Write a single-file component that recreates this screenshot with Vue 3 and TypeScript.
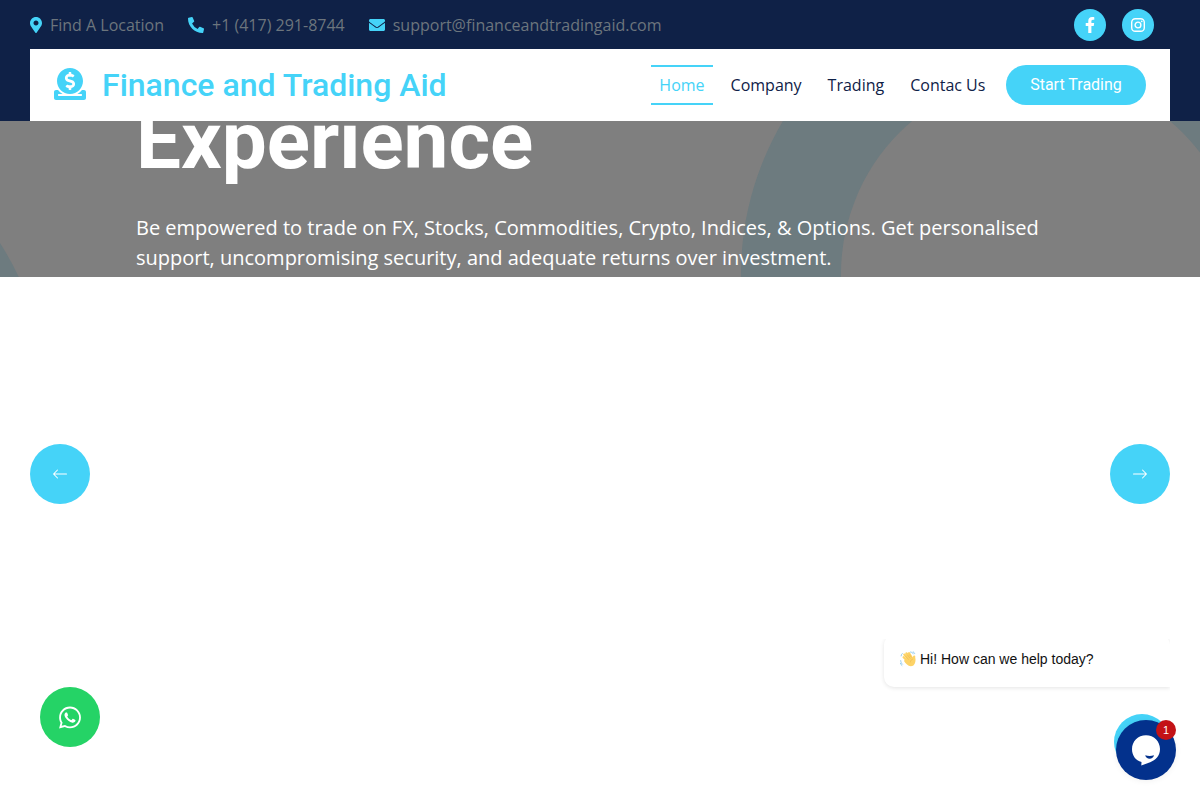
<script setup lang="ts">
interface NavLink {
  label: string
  active?: boolean
}

const links: NavLink[] = [
  { label: 'Home', active: true },
  { label: 'Company' },
  { label: 'Trading' },
  { label: 'Contac Us' },
]
</script>

<template>
  <div class="page">
    <header>
      <div class="topbar">
        <div class="contact">
          <svg class="pin" viewBox="0 0 384 512"><path d="M172.268 501.67C26.97 291.031 0 269.413 0 192 0 85.961 85.961 0 192 0s192 85.961 192 192c0 77.413-26.97 99.031-172.268 309.67-9.535 13.774-29.93 13.773-39.464 0zM192 272c44.183 0 80-35.817 80-80s-35.817-80-80-80-80 35.817-80 80 35.817 80 80 80z" /></svg>
          <span>Find A Location</span>
        </div>
        <div class="contact">
          <svg class="phone" viewBox="0 0 512 512"><path d="M497.39 361.8l-112-48a24 24 0 0 0-28 6.9l-49.6 60.6A370.66 370.66 0 0 1 130.6 204.11l60.6-49.6a23.94 23.94 0 0 0 6.9-28l-48-112A24.16 24.16 0 0 0 122.6.61l-104 24A24 24 0 0 0 0 48c0 256.5 207.9 464 464 464a24 24 0 0 0 23.4-18.6l24-104a24.29 24.29 0 0 0-14.01-27.6z" /></svg>
          <span>+1 (417) 291-8744</span>
        </div>
        <div class="contact">
          <svg class="mail" viewBox="0 0 512 512"><path d="M502.3 190.8c3.9-3.1 9.7-.2 9.7 4.7V400c0 26.5-21.5 48-48 48H48c-26.5 0-48-21.5-48-48V195.6c0-5 5.7-7.8 9.7-4.7 22.4 17.4 52.1 39.5 154.1 113.6 21.1 15.4 56.7 47.8 92.2 47.6 35.7.3 72-32.8 92.3-47.6 102-74.1 131.6-96.3 154-113.7zM256 320c23.2.4 56.6-29.2 73.4-41.4 132.7-96.3 142.8-104.7 173.4-128.7 5.8-4.5 9.2-11.5 9.2-18.9v-19c0-26.5-21.5-48-48-48H48c-26.5 0-48 21.5-48 48v19c0 7.4 3.4 14.3 9.2 18.9 30.6 23.9 40.7 32.4 173.4 128.7 16.8 12.2 50.2 41.8 73.4 41.4z" /></svg>
          <span>support@financeandtradingaid.com</span>
        </div>
        <div class="socials">
          <a class="social">
            <svg class="facebook" viewBox="0 0 320 512"><path d="M279.14 288l14.22-92.66h-88.91v-60.13c0-25.35 12.42-50.06 52.24-50.06h40.42V6.26S260.43 0 225.36 0c-73.22 0-121.08 44.38-121.08 124.72v70.62H22.89V288h81.39v224h100.17V288z" /></svg>
          </a>
          <a class="social">
            <svg class="instagram" viewBox="0 0 16 16">
              <rect x="1.7" y="1.7" width="12.6" height="12.6" rx="3.6" />
              <circle cx="8" cy="8" r="2.9" />
              <circle class="dot" cx="11.75" cy="4.3" r="0.85" />
            </svg>
          </a>
        </div>
      </div>
      <nav class="navbar">
        <a class="brand">
          <svg viewBox="0 0 512 512"><path d="M256 416c114.9 0 208-93.1 208-208S370.9 0 256 0 48 93.1 48 208s93.1 208 208 208zM233.8 97.4V80.6c0-9.2 7.4-16.6 16.6-16.6h11.1c9.2 0 16.6 7.4 16.6 16.6v17c15.5.8 30.5 6.1 43 15.4 5.6 4.1 6.2 12.3 1.2 17.1L306 145.6c-3.8 3.7-9.5 3.8-14 1-5.4-3.4-11.4-5.1-17.8-5.1h-38.9c-9 0-16.3 8.2-16.3 18.3 0 8.2 5 15.5 12.1 17.6l62.3 18.7c25.7 7.7 43.7 32.4 43.7 60.1 0 34-26.4 61.5-59.1 62.4v16.8c0 9.2-7.4 16.6-16.6 16.6h-11.1c-9.2 0-16.6-7.4-16.6-16.6v-17c-15.5-.8-30.5-6.1-43-15.4-5.6-4.1-6.2-12.3-1.2-17.1l16.3-15.5c3.8-3.7 9.5-3.8 14-1 5.4 3.4 11.4 5.1 17.8 5.1h38.9c9 0 16.3-8.2 16.3-18.3 0-8.2-5-15.5-12.1-17.6l-62.3-18.7c-25.7-7.7-43.7-32.4-43.7-60.1.1-34 26.4-61.5 59.1-62.4zM480 352h-32.5c-19.6 26-44.6 47.7-73 64h63.8c5.3 0 9.6 3.6 9.6 8v16c0 4.4-4.3 8-9.6 8H73.6c-5.3 0-9.6-3.6-9.6-8v-16c0-4.4 4.3-8 9.6-8h63.8c-28.4-16.3-53.3-38-73-64H32c-17.7 0-32 14.3-32 32v96c0 17.7 14.3 32 32 32h448c17.7 0 32-14.3 32-32v-96c0-17.7-14.3-32-32-32z" /></svg>
          <span>Finance and Trading Aid</span>
        </a>
        <div class="links">
          <a v-for="link in links" :key="link.label" class="link" :class="{ active: link.active }">{{ link.label }}</a>
        </div>
        <a class="cta">Start Trading</a>
      </nav>
    </header>

    <section class="hero">
      <svg class="rings" viewBox="0 0 1200 156">
        <circle cx="1041" cy="153" r="250" />
        <circle cx="-252" cy="285" r="250" />
      </svg>
      <div class="caption">
        <h1>Experience</h1>
        <p>Be empowered to trade on FX, Stocks, Commodities, Crypto, Indices, &amp; Options. Get personalised support, uncompromising security, and adequate returns over investment.</p>
      </div>
    </section>

    <button class="arrow prev">
      <svg viewBox="0 0 16 16"><path d="M15 8a.5.5 0 0 0-.5-.5H2.707l3.147-3.146a.5.5 0 1 0-.708-.708l-4 4a.5.5 0 0 0 0 .708l4 4a.5.5 0 0 0 .708-.708L2.707 8.5H14.5A.5.5 0 0 0 15 8z" /></svg>
    </button>
    <button class="arrow next">
      <svg viewBox="0 0 16 16"><path d="M1 8a.5.5 0 0 1 .5-.5h11.793l-3.147-3.146a.5.5 0 0 1 .708-.708l4 4a.5.5 0 0 1 0 .708l-4 4a.5.5 0 0 1-.708-.708L13.293 8.5H1.5A.5.5 0 0 1 1 8z" /></svg>
    </button>

    <a class="whatsapp">
      <svg viewBox="0 0 448 512"><path d="M380.9 97.1C339 55.1 283.2 32 223.9 32c-122.4 0-222 99.6-222 222 0 39.1 10.2 77.3 29.6 111L0 480l117.7-30.9c32.4 17.7 68.9 27 106.1 27h.1c122.3 0 224.1-99.6 224.1-222 0-59.3-25.2-115-67.1-157zm-157 341.6c-33.2 0-65.7-8.9-94-25.7l-6.7-4-69.8 18.3L72 359.2l-4.4-7c-18.5-29.4-28.2-63.3-28.2-98.2 0-101.7 82.8-184.5 184.6-184.5 49.3 0 95.6 19.2 130.4 54.1 34.8 34.9 56.2 81.2 56.1 130.5 0 101.8-84.9 184.6-186.6 184.6zm101.2-138.2c-5.5-2.8-32.8-16.2-37.9-18-5.1-1.9-8.8-2.8-12.5 2.8-3.7 5.6-14.3 18-17.6 21.8-3.2 3.7-6.5 4.2-12 1.4-32.6-16.3-54-29.1-75.5-66-5.7-9.8 5.7-9.1 16.3-30.3 1.8-3.7.9-6.9-.5-9.7-1.4-2.8-12.5-30.1-17.1-41.2-4.5-10.8-9.1-9.3-12.5-9.5-3.2-.2-6.9-.2-10.6-.2-3.7 0-9.7 1.4-14.8 6.9-5.1 5.6-19.4 19-19.4 46.3 0 27.3 19.9 53.7 22.6 57.4 2.8 3.7 39.1 59.7 94.8 83.8 35.2 15.2 49 16.5 66.6 13.9 10.7-1.6 32.8-13.4 37.4-26.4 4.6-13 4.6-24.1 3.2-26.4-1.3-2.5-5-3.9-10.5-6.6z" /></svg>
    </a>

    <div class="greeting-clip">
      <div class="greeting">
        <svg class="wave" viewBox="0 0 16 16">
          <g class="fingers">
            <path d="M3.600 6.200L8 10.500M4.300 3.600L9 8.600M6.400 2.300L10.800 7.600M9 2.200L12 7M14.200 5.600L13.300 9" />
          </g>
          <path class="palm" d="M4.800 8.500L10.500 5l2.700 2.300 1.300-2c1.400 1.700 1.200 4.500.5 6.700-.7 2-2.100 3.300-4.300 3.300-2.700 0-4.900-2.700-6.700-5.300z" />
          <path class="creases" d="M5.600 5.200l2.900 3.200M7.600 4.100l2.600 3.200M9.800 4l1.400 2.200M10.400 11c.1-1.600.9-2.500 2.300-2.900" />
          <path class="motion" d="M10.500 1c1.300.1 2.300.8 2.900 1.900M13.200.8c.7.4 1.200 1 1.500 1.700M.7 9.600c.1 1.500.7 2.700 1.700 3.600M.4 12.400c.3.900.8 1.600 1.500 2.100M1.100 4.900c.1-1 .5-1.800 1.200-2.400" />
        </svg>
        <span>Hi! How can we help today?</span>
      </div>
    </div>

    <div class="back-to-top"></div>
    <button class="chat">
      <svg viewBox="0 0 60 60">
        <path class="bubble" d="M30 15.200c8 0 14 6.100 14 13.800 0 7-4.600 11.300-9.800 13.200L25.300 45.400l.2-3.300C19.700 40.400 16 35.600 16 29c0-7.700 6-13.800 14-13.800z" />
        <path class="smile" d="M29.200 35.200c2.800.9 6 .9 8.800 0-.5 2.200-2.200 3.500-4.400 3.500s-3.900-1.300-4.400-3.500z" />
      </svg>
      <span class="badge">1</span>
    </button>
  </div>
</template>

<style>
html,
body {
  margin: 0;
  background: #fff;
}
</style>

<style scoped>
.page {
  position: relative;
  width: 1200px;
  height: 800px;
  overflow: hidden;
  box-sizing: border-box;
  background: #fff;
  font-family: 'Open Sans', sans-serif;
  font-size: 16px;
  line-height: 24px;
}
.page * {
  box-sizing: border-box;
}
svg {
  display: block;
  fill: currentColor;
  flex: none;
}
header {
  height: 121px;
  padding: 0 30px;
  background: #0f2147;
}
.topbar {
  display: flex;
  align-items: center;
  height: 49px;
  padding-top: 1px;
  padding-right: 16px;
  color: #6c757d;
}
.contact {
  display: flex;
  align-items: center;
  gap: 8px;
  margin-right: 24px;
  white-space: nowrap;
}
.contact svg {
  color: #45d3f8;
}
.pin {
  width: 12px;
  height: 16px;
}
.phone,
.mail {
  width: 16px;
  height: 16px;
}
.socials {
  display: flex;
  gap: 16px;
  margin-left: auto;
}
.social {
  display: flex;
  align-items: center;
  justify-content: center;
  width: 32px;
  height: 32px;
  border-radius: 50%;
  background: #45d3f8;
  color: #fff;
}
.facebook {
  width: 10px;
  height: 16px;
}
.instagram {
  width: 16px;
  height: 16px;
  fill: none;
  stroke: #fff;
  stroke-width: 1.4;
}
.dot {
  fill: #fff;
  stroke: none;
}
.navbar {
  display: flex;
  align-items: center;
  height: 72px;
  padding: 0 24px;
  background: #fff;
}
.brand {
  display: flex;
  align-items: center;
  gap: 16px;
  color: #45d3f8;
  font: 500 32px/38px Roboto, sans-serif;
  white-space: nowrap;
}
.brand svg {
  width: 32px;
  height: 32px;
  margin-top: -3px;
}
.links {
  display: flex;
  gap: 10px;
  margin-left: auto;
}
.link {
  height: 40px;
  padding: 6px 8px;
  border: solid transparent;
  border-width: 2px 0;
  color: #0f2147;
  white-space: nowrap;
}
.link.active {
  border-color: #45d3f8;
  color: #45d3f8;
}
.cta {
  width: 140px;
  height: 40px;
  margin-left: 12.600px;
  border-radius: 20px;
  background: #45d3f8;
  color: #fff;
  font: 400 16px/39px Roboto, sans-serif;
  text-align: center;
}
.hero {
  position: relative;
  height: 156px;
  overflow: hidden;
  background: #7f7f7f;
}
.rings {
  position: absolute;
  inset: 0;
  width: 1200px;
  height: 156px;
  fill: none;
  stroke: #6d7b7f;
  stroke-width: 100;
}
.caption {
  position: relative;
  width: 928px;
  margin: -28px auto 0;
  color: #fff;
}
.caption h1 {
  margin: 0 0 24px;
  font: 700 80px/96px Roboto, sans-serif;
}
.caption p {
  margin: 0;
  font-size: 20px;
  line-height: 30px;
}
button {
  padding: 0;
  border: 0;
}
.arrow {
  position: absolute;
  top: 444px;
  display: flex;
  align-items: center;
  justify-content: center;
  width: 60px;
  height: 60px;
  border-radius: 50%;
  background: #45d3f8;
  color: #fff;
}
.arrow svg {
  width: 16px;
  height: 16px;
  margin-top: -1px;
}
.prev {
  left: 30px;
}
.next {
  right: 30px;
}
.whatsapp {
  position: absolute;
  left: 40px;
  top: 687px;
  display: flex;
  align-items: center;
  justify-content: center;
  width: 60px;
  height: 60px;
  border-radius: 50%;
  background: #25d366;
  color: #fff;
}
.whatsapp svg {
  width: 22px;
  height: 25px;
}
.greeting-clip {
  position: absolute;
  left: 874px;
  top: 635px;
  width: 297px;
  height: 64px;
  padding: 0 1px 0 10px;
  overflow: hidden;
}
.greeting {
  display: flex;
  align-items: flex-start;
  gap: 4px;
  height: 52px;
  padding: 14px 16px;
  border-radius: 10px 10px 0 10px;
  background: #fff;
  box-shadow: 0 1px 4px rgba(0, 0, 0, 0.11);
  clip-path: inset(4px 0 -10px -10px);
  color: #111;
  font: 14px/20px 'Liberation Sans', Arial, sans-serif;
}
.wave {
  width: 16px;
  height: 16px;
  margin-top: 2px;
  fill: none;
  stroke-linecap: round;
}
.fingers {
  stroke: #fdd367;
  stroke-width: 2.2;
}
.palm {
  fill: #fdd367;
}
.creases {
  stroke: #e9b04a;
  stroke-width: 0.5;
}
.motion {
  stroke: #7cc0ea;
  stroke-width: 0.8;
}
.back-to-top {
  position: absolute;
  left: 1114px;
  top: 714px;
  width: 56px;
  height: 56px;
  border-radius: 50%;
  background: #45d3f8;
}
.chat {
  position: absolute;
  left: 1116px;
  top: 720px;
  width: 60px;
  height: 60px;
  border-radius: 50%;
  background: #03318c;
  box-shadow: 0 1px 6px rgba(0, 0, 0, 0.06);
}
.bubble {
  fill: #fff;
}
.smile {
  fill: #03318c;
}
.badge {
  position: absolute;
  top: 0;
  right: 0;
  width: 20px;
  height: 20px;
  border-radius: 50%;
  background: #c31216;
  color: #fff;
  font: 11px/20px 'Liberation Sans', Arial, sans-serif;
  text-align: center;
}
</style>
